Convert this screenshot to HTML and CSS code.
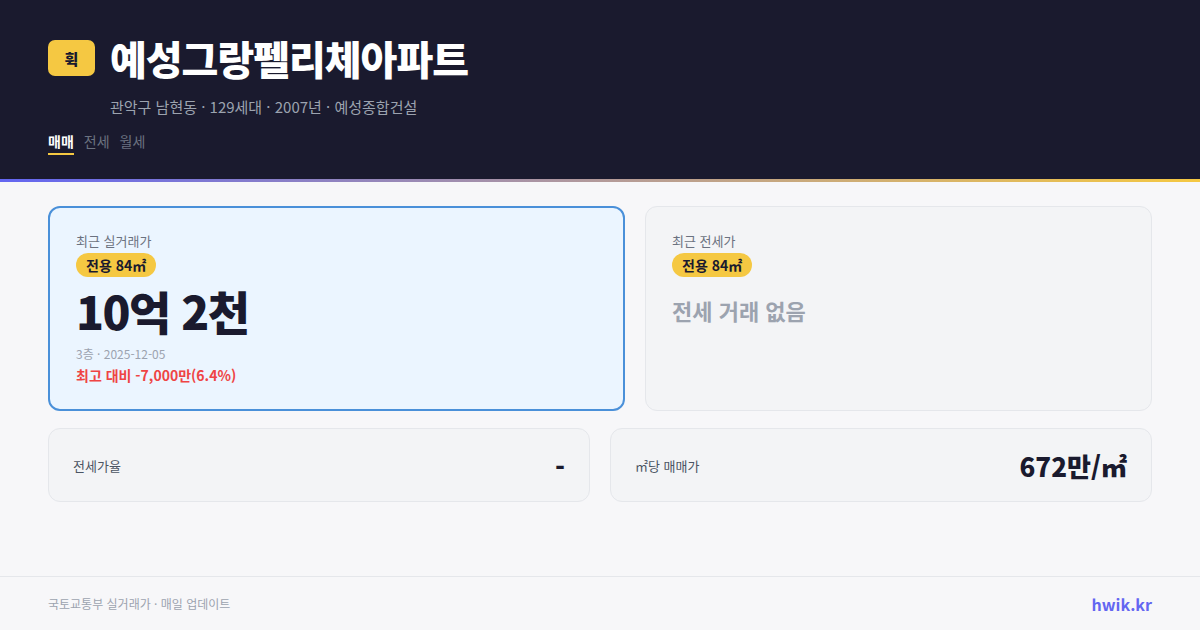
FILE: index.html
```html
<!DOCTYPE html>
<html lang="ko">
<head>
<meta charset="utf-8">
<link rel="stylesheet" href="styles.css">
</head>
<body>
<div class="page">
  <header class="hero">
    <div class="title-row">
      <div class="logo">휙</div>
      <h1 class="title">예성그랑펠리체아파트</h1>
    </div>
    <div class="subtitle">관악구 남현동 · 129세대 · 2007년 · 예성종합건설</div>
    <nav class="tabs">
      <span class="tab active">매매</span>
      <span class="tab">전세</span>
      <span class="tab">월세</span>
    </nav>
  </header>
  <div class="accent"></div>
  <main class="main">
    <section class="top-grid">
      <div class="card card-primary">
        <div class="label">최근 실거래가</div>
        <span class="pill">전용 84㎡</span>
        <div class="price">10억 2천</div>
        <div class="meta">3층 · 2025-12-05</div>
        <div class="diff">최고 대비 -7,000만(6.4%)</div>
      </div>
      <div class="card card-muted">
        <div class="label">최근 전세가</div>
        <span class="pill">전용 84㎡</span>
        <div class="empty">전세 거래 없음</div>
      </div>
    </section>
    <section class="bottom-grid">
      <div class="stat">
        <span class="stat-label">전세가율</span>
        <span class="stat-value">-</span>
      </div>
      <div class="stat">
        <span class="stat-label">㎡당 매매가</span>
        <span class="stat-value">672만/㎡</span>
      </div>
    </section>
  </main>
  <footer class="footer">
    <span class="source">국토교통부 실거래가 · 매일 업데이트</span>
    <span class="brand">hwik.kr</span>
  </footer>
</div>
</body>
</html>
```
FILE: styles.css
```css
* { box-sizing: border-box; }
html, body { margin: 0; padding: 0; }
body {
  width: 1200px;
  height: 630px;
  overflow: hidden;
  background: #f7f7f9;
  font-family: "Noto Sans CJK KR", "Noto Sans", sans-serif;
  color: #1a1a2e;
}
.page {
  height: 630px;
  display: flex;
  flex-direction: column;
}
.hero {
  background: #1a1a2e;
  height: 179px;
  padding: 36px 48px 0;
}
.title-row {
  display: flex;
  align-items: center;
  gap: 15px;
  height: 44px;
}
.logo {
  width: 47px;
  height: 36px;
  border-radius: 7px;
  background: #f5c842;
  color: #1a1a2e;
  font-size: 15px;
  font-weight: 900;
  display: flex;
  align-items: center;
  justify-content: center;
}
.title {
  margin: 0;
  color: #ffffff;
  font-size: 40px;
  font-weight: 900;
  letter-spacing: -1px;
  line-height: 44px;
}
.subtitle {
  margin: 16px 0 0 62px;
  font-size: 15px;
  line-height: 22px;
  color: #9ca3af;
}
.tabs {
  display: flex;
  gap: 10px;
  margin-top: 13px;
}
.tab {
  font-size: 14px;
  line-height: 20px;
  color: #6b7280;
  padding-bottom: 2px;
}
.tab.active {
  color: #ffffff;
  font-weight: 700;
  border-bottom: 2px solid #f5c842;
}
.accent {
  height: 3px;
  background: linear-gradient(90deg, #6366f1 0%, #b39a9a 50%, #f5c842 100%);
}
.main {
  flex: 1;
  padding: 24px 48px 0;
}
.top-grid {
  display: grid;
  grid-template-columns: 577fr 507fr;
  gap: 20px;
  height: 204px;
}
.card {
  border-radius: 12px;
  display: flex;
  flex-direction: column;
  align-items: flex-start;
}
.card-primary {
  background: #ebf5ff;
  border: 2px solid #4a90d9;
  padding: 23px 26px;
}
.card-muted {
  background: #f3f4f6;
  border: 1px solid #e5e7eb;
  padding: 24px 26px;
}
.label {
  font-size: 13px;
  line-height: 20px;
  color: #6b7280;
}
.pill {
  margin-top: 2px;
  background: #f5c842;
  color: #1a1a2e;
  font-size: 14px;
  font-weight: 700;
  line-height: 24px;
  padding: 0 10px;
  border-radius: 12px;
}
.price {
  margin-top: 4px;
  font-size: 46px;
  font-weight: 900;
  line-height: 58px;
  letter-spacing: -1.5px;
  color: #1a1a2e;
}
.meta {
  margin-top: 6px;
  font-size: 12px;
  line-height: 18px;
  color: #9ca3af;
}
.diff {
  margin-top: 1px;
  font-size: 14px;
  font-weight: 700;
  line-height: 22px;
  color: #ef4444;
}
.empty {
  margin-top: 17px;
  font-size: 22px;
  font-weight: 700;
  line-height: 32px;
  color: #9ca3af;
}
.bottom-grid {
  display: grid;
  grid-template-columns: 1fr 1fr;
  gap: 20px;
  margin-top: 18px;
}
.stat {
  height: 74px;
  background: #f3f4f6;
  border: 1px solid #e5e7eb;
  border-radius: 12px;
  padding: 0 24px;
  display: flex;
  align-items: center;
  justify-content: space-between;
}
.stat-label {
  font-size: 13px;
  color: #4b5563;
}
.stat-value {
  font-size: 26px;
  font-weight: 900;
  color: #1a1a2e;
}
.footer {
  height: 54px;
  border-top: 1px solid #e5e7eb;
  padding: 0 48px;
  display: flex;
  align-items: center;
  justify-content: space-between;
}
.source {
  font-size: 12px;
  color: #9ca3af;
}
.brand {
  font-size: 16px;
  font-weight: 700;
  color: #6366f1;
}
```
